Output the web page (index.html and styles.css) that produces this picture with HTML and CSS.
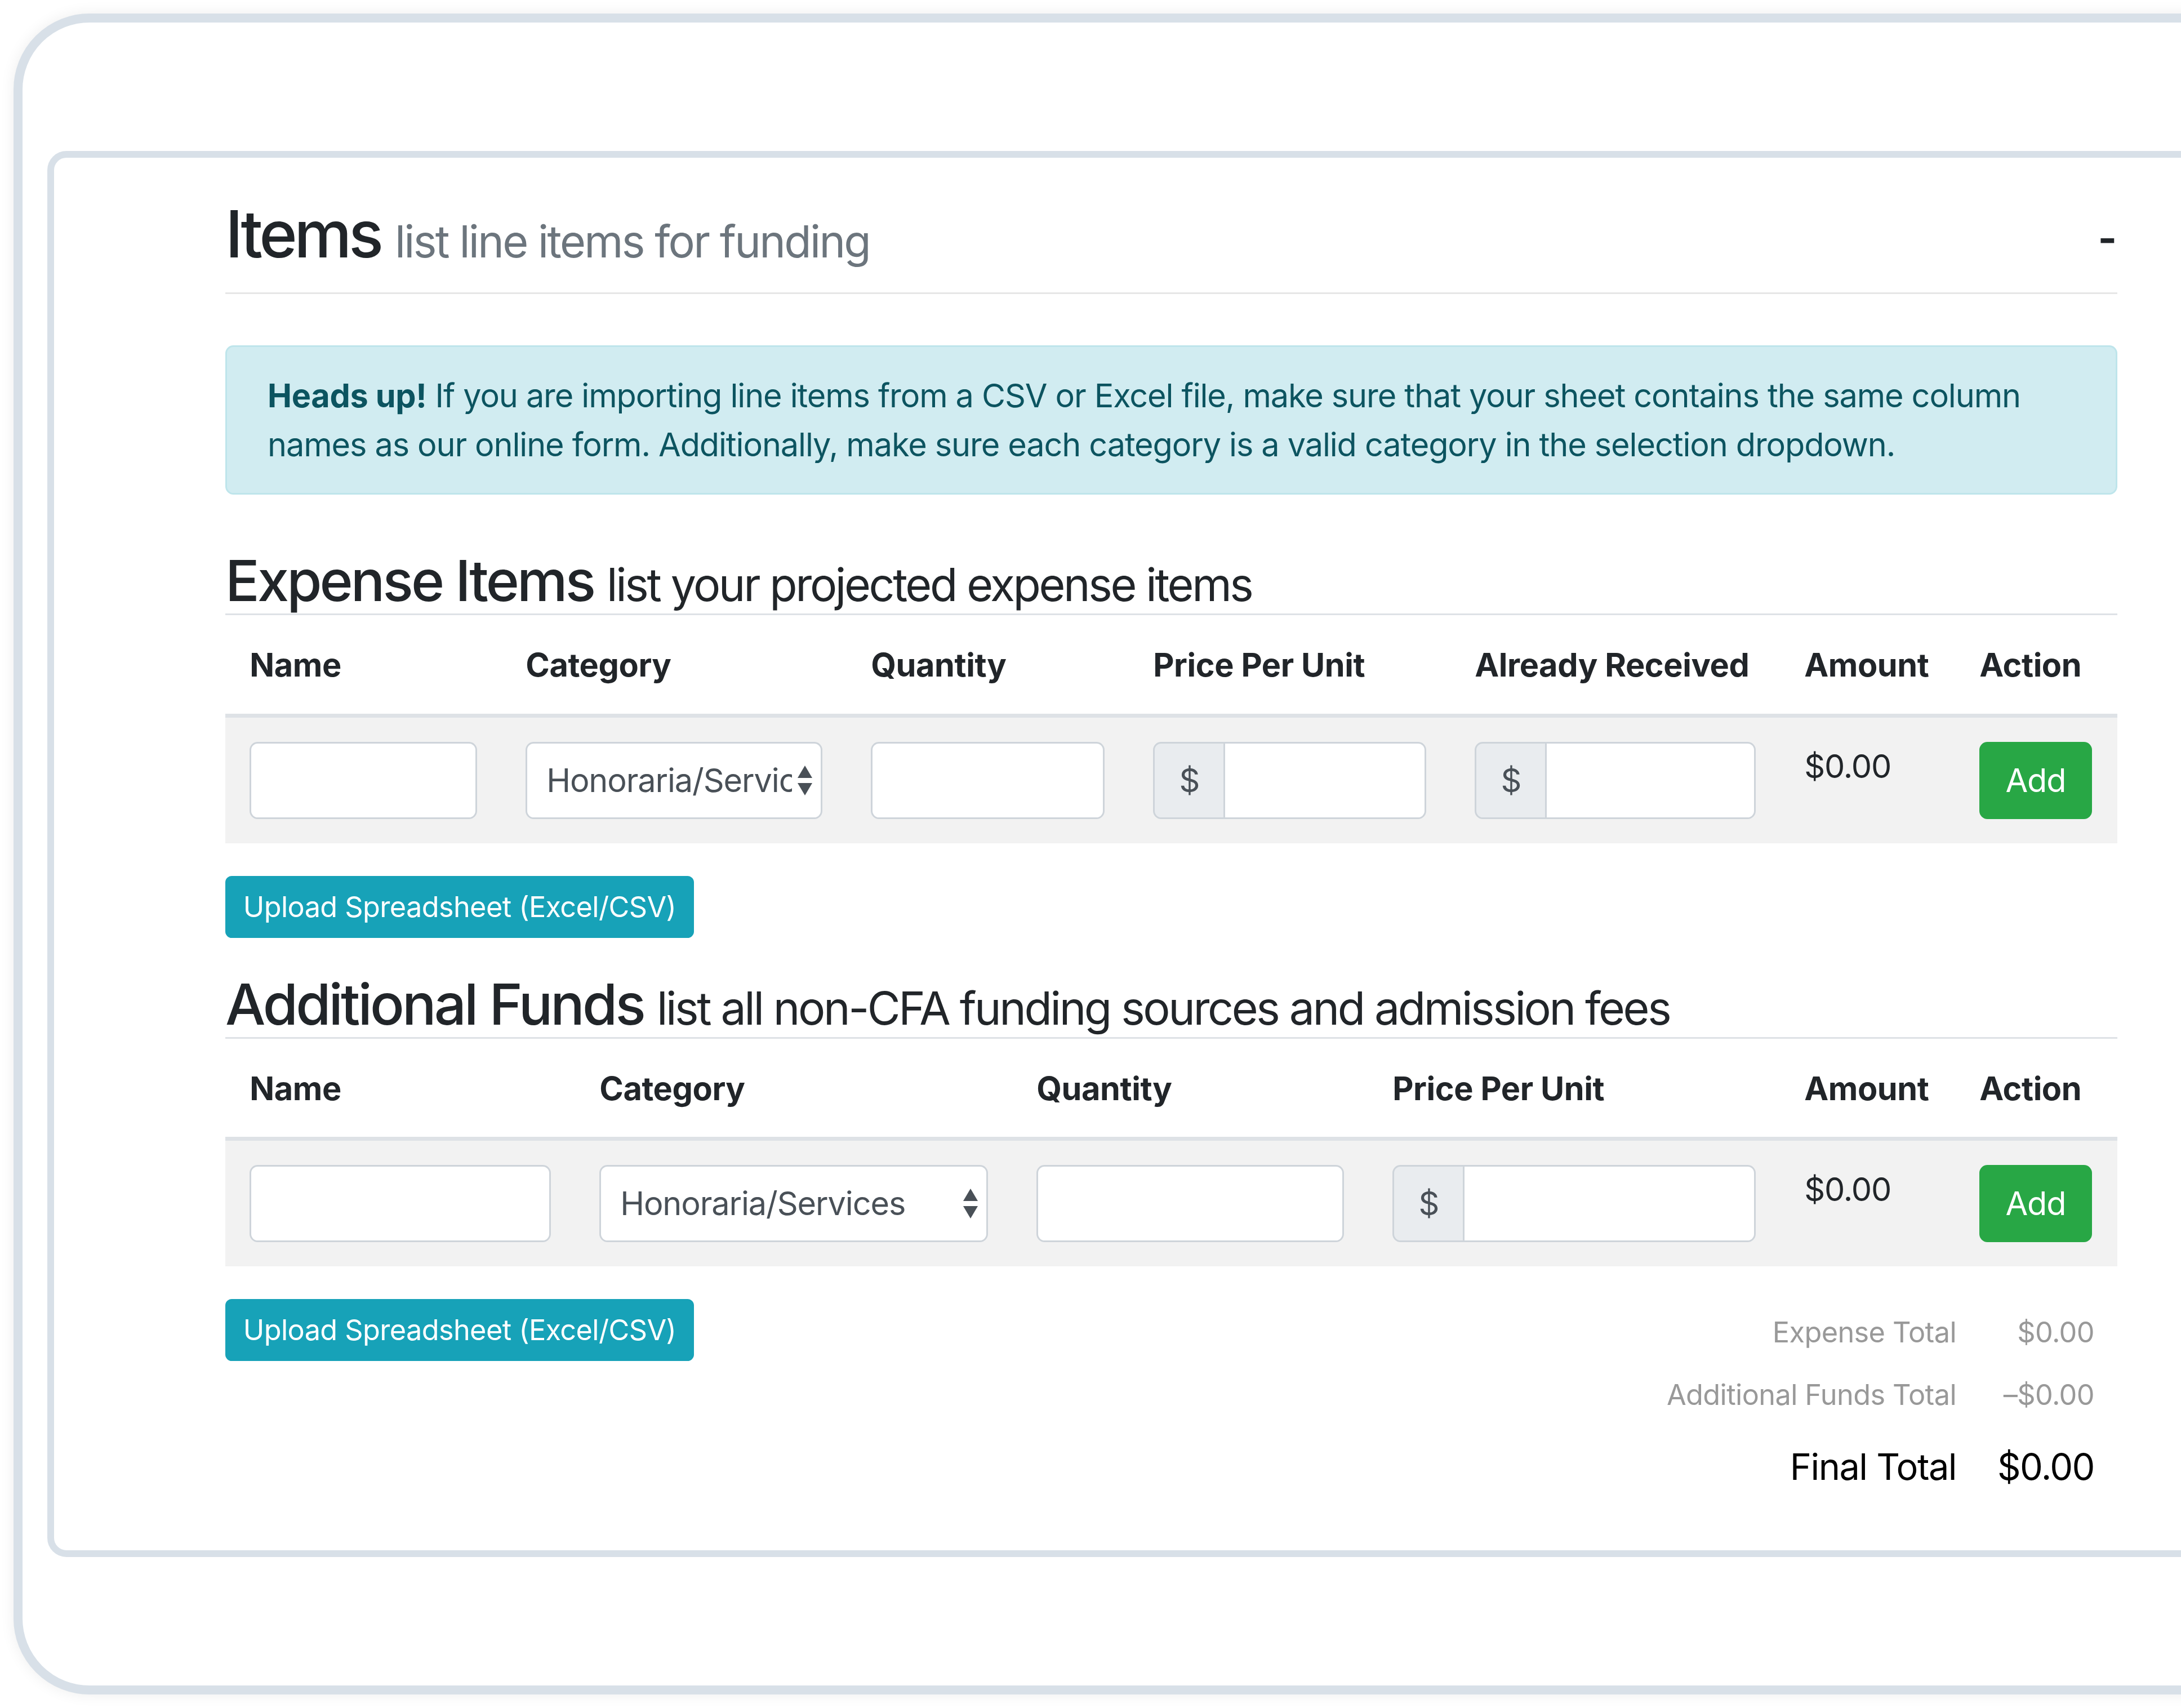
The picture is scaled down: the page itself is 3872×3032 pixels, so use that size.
FILE: index.html
```html
<!DOCTYPE html>
<html lang="en">
<head>
<meta charset="utf-8">
<title>Items</title>
<link rel="stylesheet" href="styles.css">
</head>
<body>
<div class="frame">
  <div class="card">
    <div class="content">
      <div class="section-header">
        <h2 class="title">Items <small class="muted">list line items for funding</small></h2>
        <span class="toggle">-</span>
      </div>

      <div class="alert"><strong>Heads up!</strong> If you are importing line items from a CSV or Excel file, make sure that your sheet contains the same column<br>names as our online form. Additionally, make sure each category is a valid category in the selection dropdown.</div>

      <h3 class="sub">Expense Items <small>list your projected expense items</small></h3>
      <div class="tbl tbl-expense">
        <div class="th">Name</div>
        <div class="th">Category</div>
        <div class="th">Quantity</div>
        <div class="th">Price Per Unit</div>
        <div class="th">Already Received</div>
        <div class="th">Amount</div>
        <div class="th">Action</div>

        <div class="td"><input class="form-control" type="text"></div>
        <div class="td">
          <div class="select"><span class="select-text">Honoraria/Services</span>
            <svg class="select-arrows" width="26" height="53" viewBox="0 0 26 53"><polygon points="13,0 26,22 0,22"/><polygon points="0,31 26,31 13,53"/></svg>
          </div>
        </div>
        <div class="td"><input class="form-control" type="text"></div>
        <div class="td"><div class="input-group"><span class="prepend">$</span><input class="form-control" type="text"></div></div>
        <div class="td"><div class="input-group"><span class="prepend">$</span><input class="form-control" type="text"></div></div>
        <div class="td amount">$0.00</div>
        <div class="td"><button class="btn-add">Add</button></div>
      </div>
      <div class="upload-row"><button class="btn-upload">Upload Spreadsheet (Excel/CSV)</button></div>

      <h3 class="sub">Additional Funds <small>list all non-CFA funding sources and admission fees</small></h3>
      <div class="tbl tbl-funds">
        <div class="th">Name</div>
        <div class="th">Category</div>
        <div class="th">Quantity</div>
        <div class="th">Price Per Unit</div>
        <div class="th">Amount</div>
        <div class="th">Action</div>

        <div class="td"><input class="form-control" type="text"></div>
        <div class="td">
          <div class="select"><span class="select-text">Honoraria/Services</span>
            <svg class="select-arrows" width="26" height="53" viewBox="0 0 26 53"><polygon points="13,0 26,22 0,22"/><polygon points="0,31 26,31 13,53"/></svg>
          </div>
        </div>
        <div class="td"><input class="form-control" type="text"></div>
        <div class="td"><div class="input-group"><span class="prepend">$</span><input class="form-control" type="text"></div></div>
        <div class="td amount">$0.00</div>
        <div class="td"><button class="btn-add">Add</button></div>
      </div>

      <div class="footer-row">
        <button class="btn-upload">Upload Spreadsheet (Excel/CSV)</button>
        <div class="totals">
          <div class="t-label">Expense Total</div><div class="t-value">$0.00</div>
          <div class="t-label">Additional Funds Total</div><div class="t-value">–$0.00</div>
          <div class="t-label t-final">Final Total</div><div class="t-value t-final">$0.00</div>
        </div>
      </div>
    </div>
  </div>
</div>
</body>
</html>
```

FILE: styles.css
```css
html, body {
  margin: 0;
  padding: 0;
  background: #ffffff;
  overflow: hidden;
}
body {
  width: 3872px;
  height: 3032px;
  font-family: "Inter", "Liberation Sans", sans-serif;
  font-size: 57.6px;
  line-height: 86.4px;
  letter-spacing: -1.1px;
  color: #212529;
}
* { box-sizing: border-box; }

.frame {
  margin: 24px 0 0 24px;
  width: 4300px;
  height: 2984px;
  border: 16px solid #d8e0e8;
  border-radius: 135px;
  padding: 228px 0 0 44px;
  box-shadow: 0 0 26px rgba(0, 0, 0, 0.07);
  background: #ffffff;
}

.card {
  width: 4200px;
  height: 2496px;
  border: 12px solid #d8e0e8;
  border-radius: 34px;
  padding: 66px 0 0 304px;
  background: #ffffff;
}

.content {
  width: 3359px;
}

.section-header {
  display: flex;
  justify-content: space-between;
  align-items: flex-start;
  padding-bottom: 35px;
  border-bottom: 3px solid #e6e6e6;
}
.title {
  margin: 0;
  font-size: 115.2px;
  line-height: 138px;
  font-weight: 500;
  color: #212529;
  letter-spacing: -5.5px;
}
.title small {
  font-size: 79px;
  line-height: 0;
  font-weight: 400;
  color: #6c757d;
  letter-spacing: -2.7px;
}
.toggle {
  font-size: 72px;
  line-height: 72px;
  font-weight: 700;
  margin-top: 41px;
  margin-right: 2px;
  color: #212529;
}

.alert {
  margin-top: 91px;
  margin-bottom: 93px;
  padding: 43.2px 72px;
  border: 3.6px solid #bee5eb;
  border-radius: 14.4px;
  background: #d1ecf1;
  color: #0c5460;
  font-size: 57.6px;
  line-height: 86.4px;
}
.alert strong {
  font-weight: 700;
  letter-spacing: -0.3px;
}

.sub {
  margin: 0;
  font-size: 100.8px;
  line-height: 118px;
  font-weight: 500;
  color: #212529;
  letter-spacing: -3.9px;
}
.sub small {
  font-size: 80.6px;
  line-height: 0;
  font-weight: 400;
  letter-spacing: -3.4px;
}

.tbl {
  display: grid;
  margin-bottom: 57.6px;
}
.tbl-expense {
  grid-template-columns: 490px 613px 501px 571px 585px 311px 288px;
}
.tbl-funds {
  grid-template-columns: 621px 776px 632px 731px 311px 288px;
}
.th {
  padding: 45px 43.2px 43.2px;
  border-top: 3.6px solid #dee2e6;
  border-bottom: 7.2px solid #dee2e6;
  font-weight: 700;
  line-height: 86.4px;
  letter-spacing: -0.4px;
  white-space: nowrap;
}
.td {
  padding: 43.2px;
  background: #f2f2f2;
  line-height: 86.4px;
}

.form-control {
  display: block;
  width: 100%;
  height: 136.8px;
  margin: 0;
  padding: 0 43.2px;
  border: 3.6px solid #ced4da;
  border-radius: 14.4px;
  background: #ffffff;
  font-family: inherit;
  font-size: 57.6px;
  color: #495057;
  outline: none;
}

.select {
  display: flex;
  align-items: center;
  height: 136.8px;
  padding: 0 15px 0 34px;
  border: 3.6px solid #ced4da;
  border-radius: 14.4px;
  background: #ffffff;
  color: #495057;
}
.select-text {
  flex: 1;
  min-width: 0;
  overflow: hidden;
  white-space: nowrap;
}
.select-arrows {
  flex: none;
  margin-left: 10px;
  fill: #495057;
}

.input-group {
  display: flex;
}
.prepend {
  display: flex;
  align-items: center;
  height: 136.8px;
  padding: 0 43.2px;
  border: 3.6px solid #ced4da;
  border-radius: 14.4px 0 0 14.4px;
  background: #e9ecef;
  color: #495057;
}
.input-group .form-control {
  flex: 1;
  min-width: 0;
  margin-left: -3.6px;
  border-radius: 0 14.4px 14.4px 0;
}

.amount {
  color: #212529;
}

.btn-add {
  height: 136.8px;
  padding: 0 43.2px;
  border: 3.6px solid #28a745;
  border-radius: 14.4px;
  background: #28a745;
  color: #ffffff;
  font-family: inherit;
  font-size: 57.6px;
  line-height: 86.4px;
  letter-spacing: -1.1px;
}

.btn-upload {
  padding: 14.4px 28.8px;
  border: 3.6px solid #17a2b8;
  border-radius: 11.5px;
  background: #17a2b8;
  color: #ffffff;
  font-family: inherit;
  font-size: 50.4px;
  line-height: 75.6px;
  letter-spacing: -0.6px;
}
.upload-row {
  margin-bottom: 57.6px;
}

.footer-row {
  display: flex;
  justify-content: space-between;
  align-items: flex-start;
}
.totals {
  display: grid;
  grid-template-columns: auto 245px;
  grid-template-rows: 111px 111px 146px;
  margin-top: 3.6px;
  margin-right: 41px;
  font-size: 50.4px;
  letter-spacing: -0.6px;
  color: #999999;
}
.t-label, .t-value {
  text-align: right;
  line-height: 111px;
  white-space: nowrap;
}
.t-final {
  font-size: 64.8px;
  line-height: 146px;
  letter-spacing: -1.5px;
  color: #000000;
}
```
